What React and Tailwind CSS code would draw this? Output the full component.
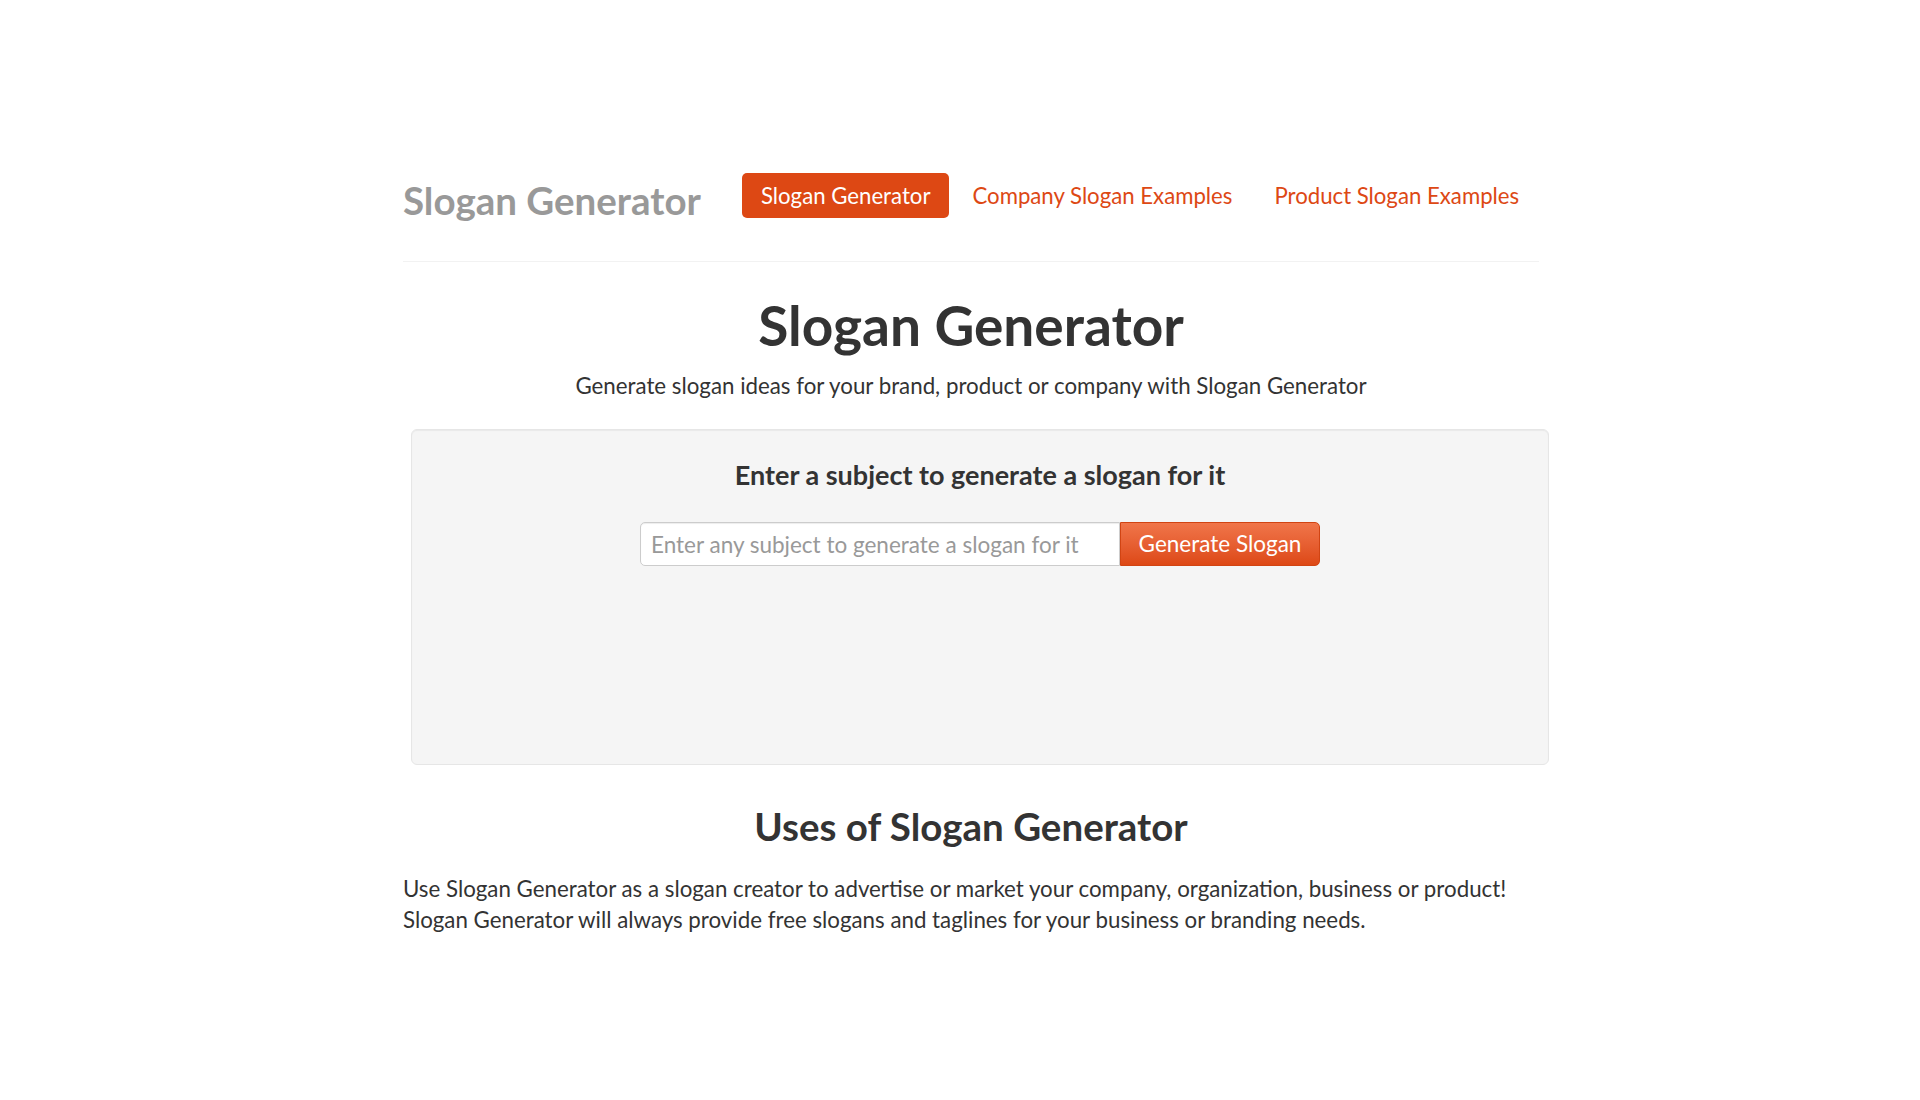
import React from "react";

const navLinks = [
    { name: "Slogan Generator", active: true },
    { name: "Company Slogan Examples" },
    { name: "Product Slogan Examples" },
];

const App = () => {
    return (
        <div className="min-h-[1100px] bg-white text-[#333333] font-['Lato','Open_Sans',sans-serif]">
            <div className="ml-[403px] w-[1136px] pt-[173px]">
                {/* navbar */}
                <div className="flex items-center h-[45px]">
                    <a className="pt-[10px] text-[38.5px] font-bold leading-[45px] text-[#999999] w-[339px]">
                        Slogan Generator
                    </a>
                    <ul className="flex items-center gap-[4px]">
                        {navLinks.map((item) => (
                            <li key={item.name}>
                                <a
                                    className={`block h-[45px] px-[19px] rounded-[5px] text-[22.2px] leading-[45px] ${item.active
                                        ? "bg-[#dd4814] text-white"
                                        : "text-[#dd4814]"
                                        }`}
                                >
                                    {item.name}
                                </a>
                            </li>
                        ))}
                    </ul>
                </div>
                <div className="mt-[43px] border-t border-[#f2f2f2]" />

                {/* header */}
                <h1 className="mt-[30px] text-center text-[55px] font-bold leading-[66px] text-[#333333]">
                    Slogan Generator
                </h1>
                <p className="mt-[13px] text-center text-[22.3px] leading-[30px]">
                    Generate slogan ideas for your brand, product or company with Slogan Generator
                </p>

                {/* well */}
                <div className="mt-[28px] ml-[8px] w-[1138px] h-[336px] rounded-[6px] border border-[#e6e6e6] bg-[#f5f5f5] shadow-[inset_0_1px_1px_rgba(0,0,0,0.05)] pt-[29px]">
                    <h3 className="text-center text-[27px] font-bold leading-[32px] text-[#333333]">
                        Enter a subject to generate a slogan for it
                    </h3>
                    <div className="mt-[31px] flex justify-center">
                        <div className="flex h-[44px]">
                            <input
                                type="text"
                                placeholder="Enter any subject to generate a slogan for it"
                                className="w-[480px] h-[44px] rounded-l-[5px] border border-[#cccccc] bg-white px-[10px] text-[22.5px] text-[#555555] placeholder:text-[#999999] shadow-[inset_0_1px_1px_rgba(0,0,0,0.075)] outline-none"
                            />
                            <button className="w-[200px] h-[44px] rounded-r-[5px] border border-[#d14413] bg-gradient-to-b from-[#f07549] to-[#dd4814] text-[22.5px] text-white">
                                Generate Slogan
                            </button>
                        </div>
                    </div>
                </div>

                {/* uses */}
                <h2 className="mt-[39px] text-center text-[38.5px] font-bold leading-[44px] text-[#333333]">
                    Uses of Slogan Generator
                </h2>
                <p className="mt-[25px] text-[22.3px] leading-[31px]">
                    Use Slogan Generator as a slogan creator to advertise or market your company, organization, business or product!
                    <br />
                    Slogan Generator will always provide free slogans and taglines for your business or branding needs.
                </p>
            </div>
        </div>
    );
};

export default App;
